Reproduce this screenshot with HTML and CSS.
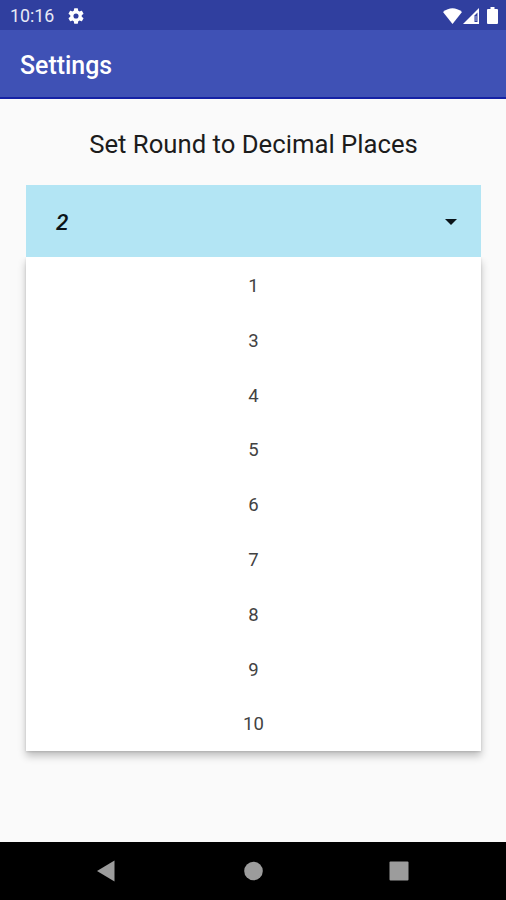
FILE: index.html
```html
<!DOCTYPE html>
<html lang="en">
<head>
<meta charset="utf-8">
<meta name="viewport" content="width=device-width">
<title>Settings</title>
<link rel="stylesheet" href="styles.css">
</head>
<body>
<div class="screen">
  <div class="status">
    <span class="clock">10:16</span>
    <svg class="gear" viewBox="2 2 20 20"><path fill="#fff" d="M19.14 12.94c.04-.3.06-.61.06-.94s-.02-.64-.07-.94l2.03-1.58a.49.49 0 0 0 .12-.61l-1.92-3.32a.49.49 0 0 0-.59-.22l-2.39.96a7 7 0 0 0-1.62-.94l-.36-2.54a.48.48 0 0 0-.48-.41h-3.84a.48.48 0 0 0-.47.41l-.36 2.54a7 7 0 0 0-1.62.94l-2.39-.96a.48.48 0 0 0-.59.22L2.74 8.87a.48.48 0 0 0 .12.61l2.03 1.58a6 6 0 0 0 0 1.88l-2.03 1.58a.49.49 0 0 0-.12.61l1.92 3.32c.12.22.37.29.59.22l2.39-.96c.5.38 1.03.7 1.62.94l.36 2.54c.05.24.24.41.48.41h3.84c.24 0 .44-.17.47-.41l.36-2.54a7 7 0 0 0 1.62-.94l2.39.96c.22.08.47 0 .59-.22l1.92-3.32a.48.48 0 0 0-.12-.61zM12 15.2a3.2 3.2 0 1 1 0-6.4 3.2 3.2 0 0 1 0 6.4z"/></svg>
    <svg class="wifi" viewBox="0 0 19 16"><path fill="#fff" d="M0 4Q9.500-3.500 19 4L9.500 16z"/></svg>
    <svg class="signal" viewBox="0 0 16 16"><path fill="#fff" d="M0 16 16 0V16z"/><path fill="#303f9f" d="M11.500 7.500 14.500 4.500V14H11.500z"/><path fill="#aab1df" d="M12.500 8h1v5h-1z"/></svg>
    <svg class="battery" viewBox="0 0 11 17"><path fill="#fff" d="M3.500 0h4v2H10q1 0 1 1v13q0 1-1 1H1q-1 0-1-1V3q0-1 1-1h2.500z"/></svg>
  </div>
  <header class="appbar"><h1>Settings</h1></header>
  <main>
    <h2>Set Round to Decimal Places</h2>
    <div class="select">
      <span>2</span>
      <svg class="caret" viewBox="0 0 12 6"><path fill="#0b1419" d="M0 0h12L6 6z"/></svg>
    </div>
    <ul class="options">
      <li>1</li><li>3</li><li>4</li><li>5</li><li>6</li><li>7</li><li>8</li><li>9</li><li>10</li>
    </ul>
  </main>
  <nav>
    <svg viewBox="0 0 20 22"><path fill="#9c9c9c" d="M1 11 18.500.5v21z"/></svg>
    <svg viewBox="0 0 20 22"><circle cx="10.500" cy="11" r="9.300" fill="#9c9c9c"/></svg>
    <svg viewBox="0 0 20 22"><rect x=".5" y="1.500" width="19" height="19" rx="1" fill="#9c9c9c"/></svg>
  </nav>
</div>
</body>
</html>
```
FILE: styles.css
```css
* { box-sizing: border-box; }
body { margin: 0; font-family: Roboto, "Liberation Sans", sans-serif; }
h1, h2, ul { margin: 0; padding: 0; }
svg { display: block; flex: none; }
.screen { width: 506px; height: 900px; display: flex; flex-direction: column; background: #fafafa; overflow: hidden; }
.status { height: 30px; background: #303f9f; color: #e8eaf6; display: flex; align-items: center; padding: 1px 8px 0 10px; }
.clock { font-size: 17.800px; line-height: 30px; width: 58px; }
.gear { width: 16px; height: 16px; }
.wifi { width: 19px; height: 16px; margin-left: auto; }
.signal { width: 16px; height: 16px; margin-left: 1px; }
.battery { width: 11px; height: 17px; margin-left: 8px; }
.appbar { height: 69px; background: #3f51b5; border-bottom: 2px solid #1521a5; padding: 5px 20px 0; display: flex; align-items: center; }
h1 { font-size: 24.900px; font-weight: 500; line-height: 30px; color: #fff; }
main { flex: 1; padding: 0 25px 0 26px; }
h2 { font-size: 25.700px; font-weight: 400; line-height: 30px; padding: 30px 0 26px; text-align: center; color: #1c1c1c; white-space: nowrap; }
.select { height: 72px; background: #b3e5f4; display: flex; align-items: center; justify-content: space-between; padding: 1px 24px 0 30px; font-size: 22.500px; font-weight: 500; font-style: italic; color: #0b1419; }
.caret { width: 12px; height: 6px; }
.options { list-style: none; height: 494px; background: #fff; padding-top: 2px; box-shadow: 0 5px 8px rgba(0,0,0,.24), 0 1px 2px rgba(0,0,0,.12); clip-path: inset(0 -20px -25px -20px); }
.options li { height: 54.800px; line-height: 55px; text-align: center; font-size: 18.500px; color: #424242; }
nav { height: 58px; background: #000; display: flex; justify-content: space-between; align-items: center; padding: 0 97px 0 96px; }
nav svg { width: 20px; height: 22px; }
```
